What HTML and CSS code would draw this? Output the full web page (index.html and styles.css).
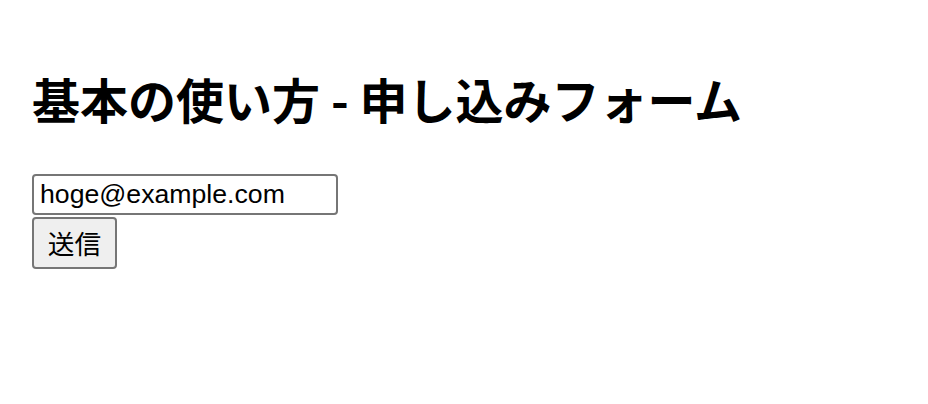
FILE: index.html
```html
<!DOCTYPE html>
<html lang="ja">
<head>
<meta charset="utf-8">
<title>基本の使い方 - 申し込みフォーム</title>
<link rel="stylesheet" href="styles.css">
</head>
<body>
<h1 class="title">基本の使い方 - 申し込みフォーム</h1>
<form class="form">
<input class="email" type="email" value="hoge@example.com">
<button class="submit" type="button">送信</button>
</form>
</body>
</html>
```

FILE: styles.css
```css
html, body {
  margin: 0;
  padding: 0;
  background: #ffffff;
}
body {
  padding: 0 32px;
  color: #000000;
}
.title {
  margin: 62px 0 0;
  font-family: "Noto Sans CJK JP", "Liberation Sans", sans-serif;
  font-weight: 700;
  font-size: 48px;
  line-height: 72px;
}
.form {
  margin: 40px 0 0;
  display: flex;
  flex-direction: column;
  align-items: flex-start;
  gap: 2px;
}
.email {
  box-sizing: border-box;
  width: 306px;
  height: 41px;
  margin: 0;
  padding: 0 6px;
  border: 2px solid #767676;
  border-radius: 4px;
  background: #ffffff;
  color: #000000;
  font-family: "Liberation Sans", Arial, sans-serif;
  font-size: 26.67px;
  outline: none;
}
.submit {
  box-sizing: border-box;
  width: 85px;
  height: 52px;
  margin: 0;
  padding: 0;
  border: 2px solid #767676;
  border-radius: 4px;
  background: #efefef;
  color: #000000;
  font-family: "Noto Sans CJK JP", sans-serif;
  font-size: 26.67px;
  line-height: 1;
}
```
